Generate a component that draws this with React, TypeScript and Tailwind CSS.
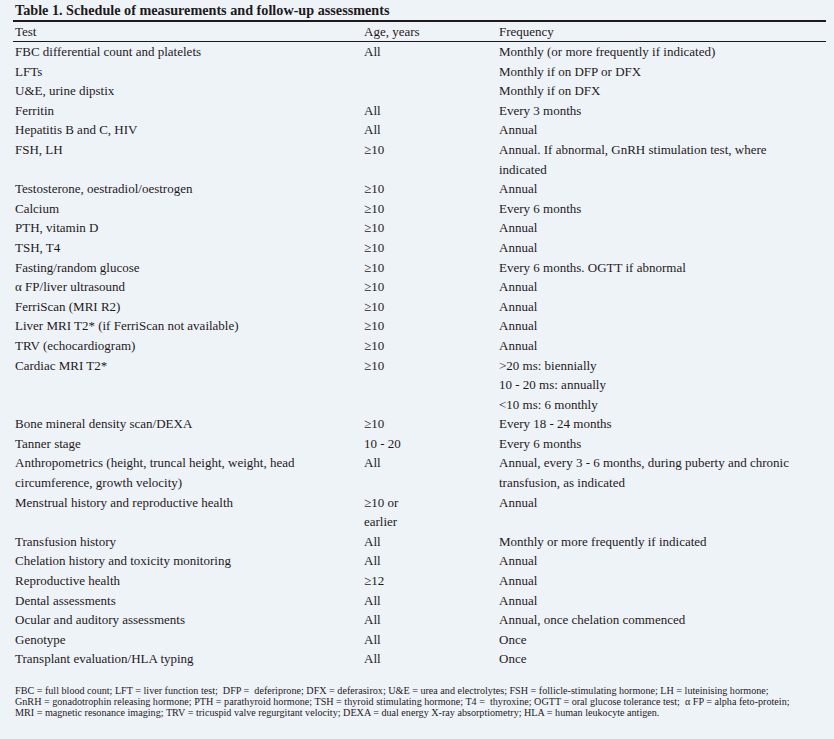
const ROWS: { test: string[]; age: string[]; freq: string[] }[] = [
  { test: ['FBC differential count and platelets'], age: ['All'], freq: ['Monthly (or more frequently if indicated)'] },
  { test: ['LFTs'], age: [''], freq: ['Monthly if on DFP or DFX'] },
  { test: ['U&E, urine dipstix'], age: [''], freq: ['Monthly if on DFX'] },
  { test: ['Ferritin'], age: ['All'], freq: ['Every 3 months'] },
  { test: ['Hepatitis B and C, HIV'], age: ['All'], freq: ['Annual'] },
  { test: ['FSH, LH'], age: ['≥10'], freq: ['Annual. If abnormal, GnRH stimulation test, where', 'indicated'] },
  { test: ['Testosterone, oestradiol/oestrogen'], age: ['≥10'], freq: ['Annual'] },
  { test: ['Calcium'], age: ['≥10'], freq: ['Every 6 months'] },
  { test: ['PTH, vitamin D'], age: ['≥10'], freq: ['Annual'] },
  { test: ['TSH, T4'], age: ['≥10'], freq: ['Annual'] },
  { test: ['Fasting/random glucose'], age: ['≥10'], freq: ['Every 6 months. OGTT if abnormal'] },
  { test: ['α FP/liver ultrasound'], age: ['≥10'], freq: ['Annual'] },
  { test: ['FerriScan (MRI R2)'], age: ['≥10'], freq: ['Annual'] },
  { test: ['Liver MRI T2* (if FerriScan not available)'], age: ['≥10'], freq: ['Annual'] },
  { test: ['TRV (echocardiogram)'], age: ['≥10'], freq: ['Annual'] },
  { test: ['Cardiac MRI T2*'], age: ['≥10'], freq: ['>20 ms: biennially', '10 - 20 ms: annually', '<10 ms: 6 monthly'] },
  { test: ['Bone mineral density scan/DEXA'], age: ['≥10'], freq: ['Every 18 - 24 months'] },
  { test: ['Tanner stage'], age: ['10 - 20'], freq: ['Every 6 months'] },
  { test: ['Anthropometrics (height, truncal height, weight, head', 'circumference, growth velocity)'], age: ['All'], freq: ['Annual, every 3 - 6 months, during puberty and chronic', 'transfusion, as indicated'] },
  { test: ['Menstrual history and reproductive health'], age: ['≥10 or', 'earlier'], freq: ['Annual'] },
  { test: ['Transfusion history'], age: ['All'], freq: ['Monthly or more frequently if indicated'] },
  { test: ['Chelation history and toxicity monitoring'], age: ['All'], freq: ['Annual'] },
  { test: ['Reproductive health'], age: ['≥12'], freq: ['Annual'] },
  { test: ['Dental assessments'], age: ['All'], freq: ['Annual'] },
  { test: ['Ocular and auditory assessments'], age: ['All'], freq: ['Annual, once chelation commenced'] },
  { test: ['Genotype'], age: ['All'], freq: ['Once'] },
  { test: ['Transplant evaluation/HLA typing'], age: ['All'], freq: ['Once'] },
]

const NOTES = [
  'FBC = full blood count; LFT = liver function test;  DFP =  deferiprone; DFX = deferasirox; U&E = urea and electrolytes; FSH = follicle-stimulating hormone; LH = luteinising hormone;',
  'GnRH = gonadotrophin releasing hormone; PTH = parathyroid hormone; TSH = thyroid stimulating hormone; T4 =  thyroxine; OGTT = oral glucose tolerance test;  α FP = alpha feto-protein;',
  'MRI = magnetic resonance imaging; TRV = tricuspid valve regurgitant velocity; DEXA = dual energy X-ray absorptiometry; HLA = human leukocyte antigen.',
]

function Cell({ lines }: { lines: string[] }) {
  return (
    <div className="pl-[2px]">
      {lines.map((l, i) => (
        <div key={i} className="whitespace-pre h-[19.6px]">{l}</div>
      ))}
    </div>
  )
}

export default function App() {
  return (
    <div className="w-[834px] h-[739px] bg-[#eef3f8] text-[#1e1a1b] font-['Liberation_Serif',serif] overflow-hidden">
      <div className="ml-[13px] w-[813px]">
        <div className="h-[22px] border-b-2 border-[#1e1a1b] pl-[2px] text-[14.2px] font-bold leading-[20px] whitespace-nowrap">
          Table 1. Schedule of measurements and follow-up assessments
        </div>
        <div className="grid grid-cols-[349px_135px_1fr] h-[20px] border-b border-[#1e1a1b] text-[13px] leading-[19px]">
          <div className="pl-[2px]">Test</div>
          <div className="pl-[2px]">Age, years</div>
          <div className="pl-[2px]">Frequency</div>
        </div>
        <div className="text-[13px] leading-[19.6px]">
          {ROWS.map((r, i) => (
            <div key={i} className="grid grid-cols-[349px_135px_1fr]">
              <Cell lines={r.test} />
              <Cell lines={r.age} />
              <Cell lines={r.freq} />
            </div>
          ))}
        </div>
        <div className="mt-[16px] pl-[2px] text-[10.15px] leading-[11px]">
          {NOTES.map((n, i) => (
            <div key={i} className="whitespace-pre">{n}</div>
          ))}
        </div>
      </div>
    </div>
  )
}
